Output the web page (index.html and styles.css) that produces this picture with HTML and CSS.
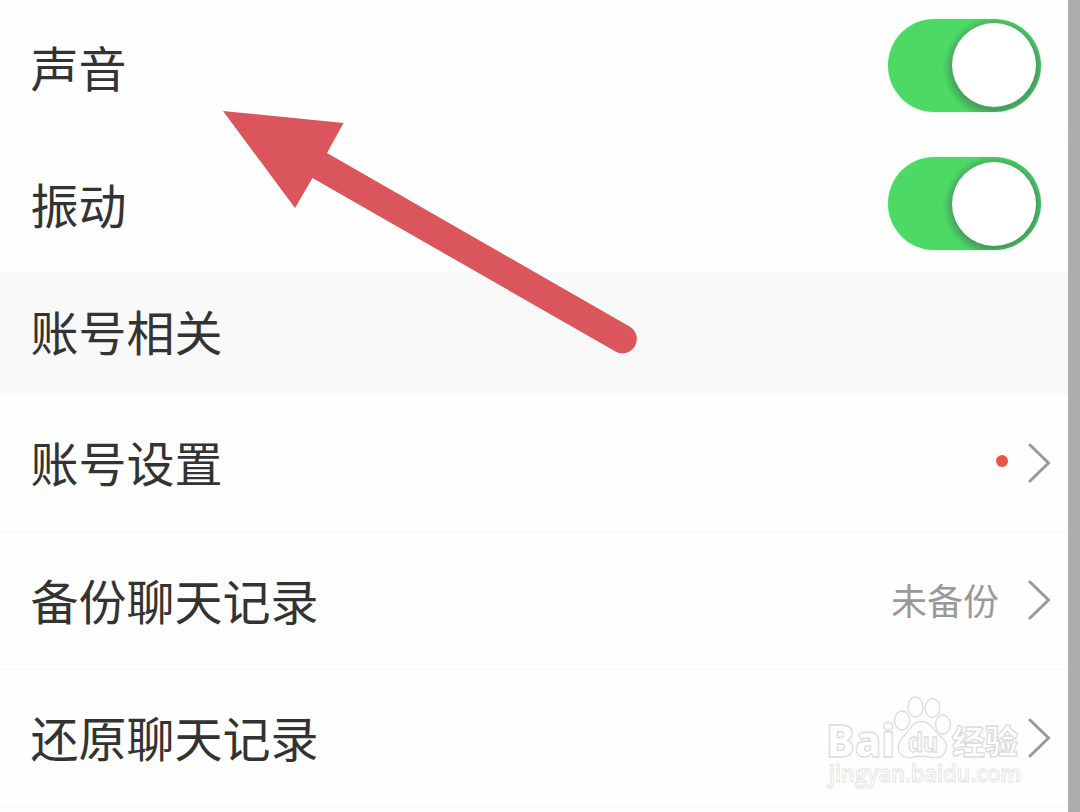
FILE: index.html
```html
<!DOCTYPE html>
<html lang="zh">
<head>
    <meta charset="UTF-8">
    <title>设置</title>
    <link rel="stylesheet" href="styles.css">
</head>
<body>

    <div class="page">
        <div class="list">
            <div class="row first">
                <span class="label">声音</span>
                <div class="switch"><div class="knob"></div></div>
            </div>
            <div class="row last">
                <span class="label">振动</span>
                <div class="switch"><div class="knob"></div></div>
            </div>

            <h2 class="section">账号相关</h2>

            <div class="row">
                <span class="label">账号设置</span>
                <span class="dot"></span>
                <svg class="arrow" viewBox="0 0 24 42"><path d="M2 3 L20.5 21 L2 39"/></svg>
            </div>
            <div class="row">
                <span class="label">备份聊天记录</span>
                <span class="value">未备份</span>
                <svg class="arrow" viewBox="0 0 24 42"><path d="M2 3 L20.5 21 L2 39"/></svg>
            </div>
            <div class="row">
                <span class="label">还原聊天记录</span>
                <svg class="arrow" viewBox="0 0 24 42"><path d="M2 3 L20.5 21 L2 39"/></svg>
            </div>
        </div>
        <div class="side"></div>

        <svg class="pointer" width="414" height="244" viewBox="223 110 414 244">
            <path d="M223 111 L343.5 123 L327 153 L629.5 326.5 A14 14 0 0 1 615.5 351.5 L312.5 178 L295 208 Z"/>
        </svg>

        <svg class="watermark" width="204" height="100" viewBox="824 692 204 100">
            <text class="brand" x="826" y="757" textLength="69" lengthAdjust="spacingAndGlyphs">Bai</text>
            <ellipse cx="902" cy="720.5" rx="7.5" ry="9.5"/>
            <ellipse cx="915.5" cy="707" rx="7.5" ry="10"/>
            <ellipse cx="932.5" cy="708" rx="7.5" ry="9.5"/>
            <ellipse cx="943" cy="724.5" rx="7.5" ry="9.5"/>
            <path d="M922 721.5 C930 721.5 934 730 939 735 C945 740 948 744 946 750 C943 759 935 758 929 757 C924 756 919 756 914 757 C907 759 900 757 898.5 749 C897 741 904 737 908 731 C912 725 915 721.5 922 721.5 Z"/>
            <text class="du" x="908" y="752" textLength="30" lengthAdjust="spacingAndGlyphs">du</text>
            <text class="cn" x="952" y="754" textLength="66" lengthAdjust="spacingAndGlyphs">经验</text>
            <text class="url" x="829" y="782" textLength="192" lengthAdjust="spacingAndGlyphs">jingyan.baidu.com</text>
        </svg>
    </div>

</body>
</html>
```

FILE: styles.css
```css
* {
    box-sizing: border-box;
}
body {
    margin: 0;
    background-color: #fefefe;
    font-family: "Noto Sans CJK SC", sans-serif;
    color: #333;
}
.page {
    position: relative;
    display: flex;
    height: 812px;
    overflow: hidden;
}
.list {
    flex: 1;
}
.side {
    width: 12px;
    background-color: #aeaeae;
}
.row {
    display: flex;
    align-items: center;
    height: 137.5px;
    padding: 0 16px 0 30.5px;
    border-bottom: 2px solid #fafafa;
}
.row.first,
.row.last {
    padding-right: 27px;
}
.row.first {
    height: 137px;
}
.row.last {
    height: 135px;
    border-bottom: none;
}
.label {
    flex: 1;
    font-size: 48px;
    line-height: 68px;
    padding-bottom: 3px;
}
.section {
    margin: 0;
    height: 123px;
    padding-left: 30.5px;
    background-color: #f9f9f9;
    font-size: 48px;
    font-weight: normal;
    line-height: 117px;
}
.switch {
    width: 153px;
    height: 93px;
    margin-bottom: 5px;
    padding: 4.5px 5px 4.5px 64px;
    border-radius: 47px;
    background-color: #4cd964;
    background-image: radial-gradient(circle at 107px 49px, #48a860 42px, #4cd964 52px);
    box-shadow: 0 0 2px #b8f5c3;
}
.row.last .switch {
    margin-bottom: 2px;
}
.knob {
    width: 84px;
    height: 84px;
    border-radius: 50%;
    background-color: #fff;
    box-shadow: 0 3px 6px rgba(0, 0, 0, 0.07);
}
.dot {
    width: 12px;
    height: 12px;
    margin: 0 20px 3px 0;
    border-radius: 50%;
    background-color: #ec564a;
}
.value {
    margin-right: 29px;
    padding-bottom: 2px;
    font-size: 36px;
    color: #999;
}
.arrow {
    width: 24px;
    height: 42px;
    fill: none;
    stroke: #999;
    stroke-width: 3;
    stroke-linecap: round;
}
.pointer {
    position: absolute;
    left: 223px;
    top: 110px;
    fill: #db565c;
}
.watermark {
    position: absolute;
    left: 824px;
    top: 692px;
    fill: #fefefe;
    stroke: #dcdcdc;
    stroke-width: 1.3;
}
.brand {
    font: 800 45px "Open Sans", sans-serif;
}
.du {
    font: bold 28px "Liberation Sans", sans-serif;
}
.cn {
    font: 900 33px "Noto Sans CJK SC", sans-serif;
}
.url {
    font: 600 23px "Open Sans", sans-serif;
    stroke: #e2e2e2;
    stroke-width: 0.9;
}
```
